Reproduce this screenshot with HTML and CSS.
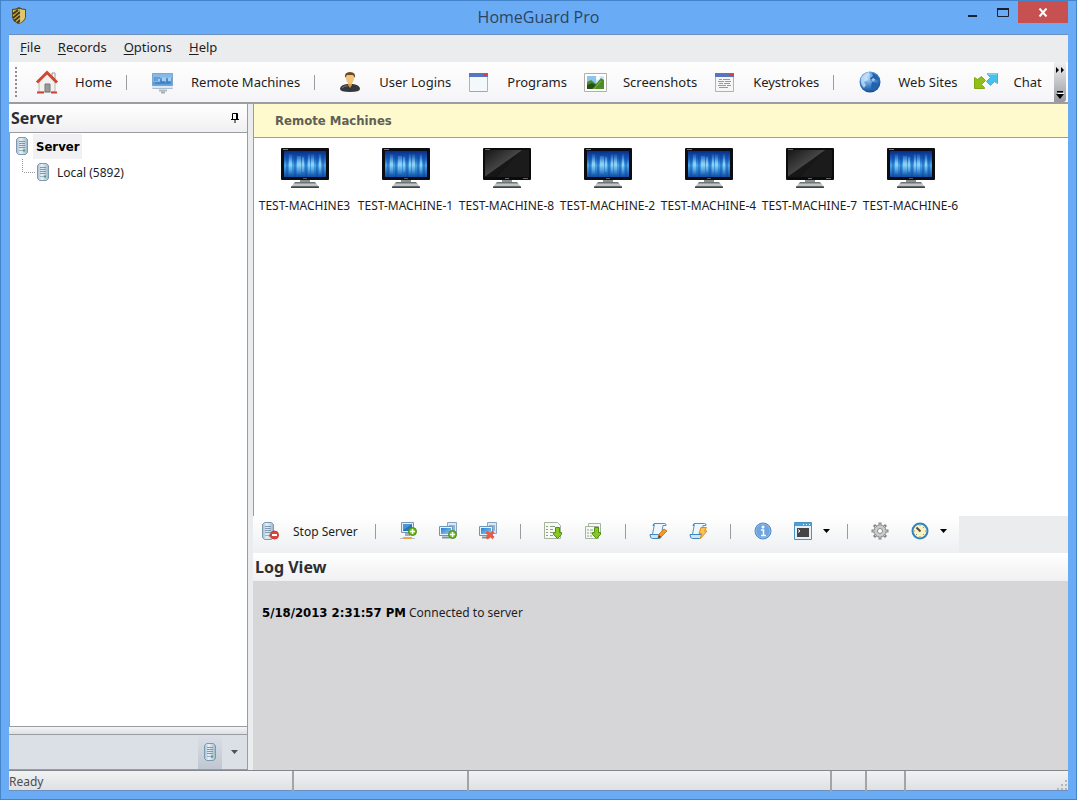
FILE: index.html
```html
<!DOCTYPE html>
<html lang="en">
<head>
    <meta charset="UTF-8">
    <meta name="viewport" content="width=device-width, initial-scale=1.0">
    <title>HomeGuard Pro</title>
    <link rel="stylesheet" href="styles.css">
</head>
<body>
    <!-- shared icons -->
    <svg class="sprite" width="0" height="0" aria-hidden="true">
        <defs>
            <linearGradient id="screenBlue" x1="0" y1="0" x2="0" y2="1">
                <stop offset="0" stop-color="#0a2a86"/>
                <stop offset="0.3" stop-color="#1560bd"/>
                <stop offset="0.55" stop-color="#48a9ea"/>
                <stop offset="1" stop-color="#0f4fa8"/>
            </linearGradient>
            <linearGradient id="beam" x1="0" y1="0" x2="0" y2="1">
                <stop offset="0" stop-color="#8fdcff" stop-opacity="0"/>
                <stop offset="0.5" stop-color="#c8f0ff" stop-opacity="0.9"/>
                <stop offset="1" stop-color="#8fdcff" stop-opacity="0"/>
            </linearGradient>
            <linearGradient id="screenDark" x1="0" y1="0" x2="1" y2="1">
                <stop offset="0" stop-color="#161616"/>
                <stop offset="0.48" stop-color="#454545"/>
                <stop offset="0.5" stop-color="#181818"/>
                <stop offset="1" stop-color="#0c0c0c"/>
            </linearGradient>
            <linearGradient id="stand" x1="0" y1="0" x2="0" y2="1">
                <stop offset="0" stop-color="#5a5f60"/>
                <stop offset="0.6" stop-color="#d5dada"/>
                <stop offset="1" stop-color="#6c7172"/>
            </linearGradient>
            <linearGradient id="steel" x1="0" y1="0" x2="1" y2="0">
                <stop offset="0" stop-color="#a3bccf"/>
                <stop offset="0.4" stop-color="#e9f2f8"/>
                <stop offset="1" stop-color="#9db5c8"/>
            </linearGradient>
            <linearGradient id="pcBlue" x1="0" y1="0" x2="1" y2="1">
                <stop offset="0" stop-color="#2b7fce"/>
                <stop offset="1" stop-color="#8ccbf3"/>
            </linearGradient>
            <radialGradient id="globeBlue" cx="0.4" cy="0.3" r="0.7">
                <stop offset="0" stop-color="#b5d9f7"/>
                <stop offset="0.5" stop-color="#4b8fd6"/>
                <stop offset="1" stop-color="#164a94"/>
            </radialGradient>
        </defs>
        <symbol id="monitor-foot" viewBox="0 0 48 40">
            <path d="M19 31h10v4H19z" fill="#8b9090"/>
            <path d="M14 34h20l4 5H10z" fill="url(#stand)"/>
            <path d="M10 38.500h28v1.500H10z" fill="#3f4444"/>
        </symbol>
        <symbol id="monitor-on" viewBox="0 0 48 40">
            <use href="#monitor-foot" width="48" height="40"/>
            <rect width="48" height="32" rx="1" fill="#0b0d12"/>
            <rect x="3" y="3" width="42" height="26" fill="url(#screenBlue)"/>
            <path d="M5 3h2v26H5zM13 3h2v26h-2zM24 3h2v26h-2zM35 3h2v26h-2zM41 3h2v26h-2z" fill="#0c3c9a" opacity="0.35"/>
            <path d="M8 6h3v20H8zM16 8h4v18h-4zM21 9h2v15h-2zM27 5h2v22h-2zM30 6h3v21h-3zM38 5h2v22h-2z" fill="url(#beam)" opacity="0.7"/>
            <path d="M2 1.500h5" stroke="#777" stroke-width="1"/>
            <path d="M22 30.500h4" stroke="#555"/>
        </symbol>
        <symbol id="monitor-off" viewBox="0 0 48 40">
            <use href="#monitor-foot" width="48" height="40"/>
            <rect width="48" height="32" rx="1" fill="#0b0b0b"/>
            <rect x="2" y="2" width="44" height="27" fill="#1b1b1b"/>
            <path d="M2 2h38L14 29H2z" fill="url(#screenDark)"/>
            <path d="M2 1.500h5M22 30.500h4M40 30.500h5" stroke="#666"/>
        </symbol>
        <symbol id="tower" viewBox="0 0 12 18">
            <path d="M2.500.5h7l2 2v13l-2 2h-7l-2-2v-13z" fill="url(#steel)" stroke="#7d99b1"/>
            <path d="M3 4.500h6M3 6.500h6M3 8.500h6M3 10.500h6" stroke="#7f9ab0"/>
            <path d="M3 13.500h4" stroke="#9db3c4"/>
            <path d="M7 12.500h2v2H7z" fill="#4f9a62"/>
        </symbol>
        <symbol id="plus" viewBox="0 0 9 9">
            <circle cx="4.500" cy="4.500" r="4" fill="#6cba1d" stroke="#4a8c12"/>
            <path d="M4.500 2v5M2 4.500h5" stroke="#fff" stroke-width="1.500"/>
        </symbol>
        <symbol id="down" viewBox="0 0 9 12">
            <path d="M2.500.5h4v5h2v2l-4 4-4-4v-2h2z" fill="#86c81e" stroke="#4f8f16"/>
        </symbol>
        <symbol id="pcs" viewBox="0 0 18 18">
            <path d="M8.500.5h9v11h-9z" fill="#dbe8f2" stroke="#8aa5bf"/>
            <path d="M10 3h6v6h-6z" fill="#8fb4d4"/>
            <path d="M.5 4.500h13v9H.5z" fill="#eaf4fb" stroke="#6b95bd"/>
            <path d="M2 6h10v6H2z" fill="url(#pcBlue)"/>
            <path d="M3 15.500h8" stroke="#7f93a4" stroke-width="2"/>
        </symbol>
        <symbol id="scroll" viewBox="0 0 18 18">
            <path d="M5.500 1.500h10q2 0 1.500 2h-3l-1.500 9H3.500z" fill="#eef7fd" stroke="#4b92c8"/>
            <path d="M6 1.500q-2 0-2 2h1M3.500 12.500H1q0 4 2.500 4h7q2 0 2.500-4z" fill="#cfe6f6" stroke="#3c85be"/>
        </symbol>
    </svg>

    <div class="window">
        <header class="titlebar">
            <svg class="app-icon" width="16" height="17" viewBox="0 0 16 17">
                <path d="M1 2q4 0 7-2 3 2 7 2v8q-1 5-7 7-6-2-7-7z" fill="#57502f"/>
                <path d="M2 3q3 0 6-1v14q-5-2-6-6z" fill="#e3b62c"/>
                <path d="M8 2q3 1 6 1v7q-1 4-6 6z" fill="#c9a23a"/>
                <path d="M2 7l5-4M2 11l7-6M3 14l6-5M6 16l3-3" stroke="#3d3a2c" stroke-width="2"/>
                <path d="M9 2q2 1 5 1v7q-1 4-5 6z" fill="#f2dd8c" opacity="0.6"/>
            </svg>
            <h1 class="title">HomeGuard Pro</h1>
            <div class="caption-buttons">
                <button class="caption" aria-label="Minimize">
                    <svg width="12" height="12" viewBox="0 0 12 12"><path d="M1 10h9" stroke="#17222e" stroke-width="2"/></svg>
                </button>
                <button class="caption" aria-label="Maximize">
                    <svg width="12" height="12" viewBox="0 0 12 12"><path d="M.5 3.500h11v7H.5z" fill="none" stroke="#17222e"/><path d="M0 3h12" stroke="#17222e" stroke-width="2"/></svg>
                </button>
                <button class="caption close" aria-label="Close">
                    <svg width="10" height="9" viewBox="0 0 10 9"><path d="M1.500.5l7 8M8.500.5l-7 8" stroke="#fff" stroke-width="2"/></svg>
                </button>
            </div>
        </header>

        <div class="client">
            <nav class="menubar">
                <button><u>F</u>ile</button>
                <button><u>R</u>ecords</button>
                <button><u>O</u>ptions</button>
                <button><u>H</u>elp</button>
            </nav>

            <div class="toolbar">
                <span class="grip"></span>
                <button class="tool">
                    <svg width="24" height="24" viewBox="0 0 24 24">
                        <path d="M4 11l8-8 8 8v11H4z" fill="#f1f1ef" stroke="#b9b9b4"/>
                        <path d="M17 3h3v6l-3-3z" fill="#fff" stroke="#999"/>
                        <path d="M2 12.500L12 2.500l10 10" fill="none" stroke="#cf4636" stroke-width="3"/>
                        <path d="M10 14h5v8h-5z" fill="#9a9a9a" stroke="#777"/>
                        <path d="M2 22.500h7M16 22.500h6" stroke="#cc4333" stroke-width="2"/>
                    </svg>
                    Home
                </button>
                <span class="sep"></span>
                <button class="tool">
                    <svg width="24" height="24" viewBox="0 0 24 24">
                        <path d="M1 3h21v16H1z" fill="#dfe7ef"/>
                        <path d="M1.500 3.500h20v12h-20z" fill="#5f9ddb" stroke="#7aa5d0"/>
                        <path d="M2 4h19v4L2 12z" fill="#86b8ea"/>
                        <path d="M4 7.500h5v4H4zM11 7.500h4v4h-4zM17 7.500h3v4h-3z" fill="#a4cdf3"/>
                        <path d="M3 8h6M3 10h4M10 8v4h4M16 8v4h4M4 13h15" fill="none" stroke="#3473b4"/>
                        <path d="M1.500 18.500h20" stroke="#a9bdd0"/>
                        <path d="M8 20.500h8" stroke="#b3b8bd" stroke-width="2"/>
                        <path d="M10 22.500h4" stroke="#a7acb2" stroke-width="2"/>
                    </svg>
                    Remote Machines
                </button>
                <span class="sep"></span>
                <button class="tool">
                    <svg width="24" height="24" viewBox="0 0 24 24">
                        <path d="M1 19q0-4 7-5h6q7 1 7 5 0 3-10 3T1 19z" fill="#35373b"/>
                        <path d="M9 12h4v3l-2 3-2-3z" fill="#d79c50"/>
                        <path d="M7 6q0-3 4-3t4 3v3q-1 5-4 5t-4-5z" fill="#f0c57e"/>
                        <path d="M6 8q-1-6 5-6t5 6l-2-3H8z" fill="#70481b"/>
                        <path d="M3 18q3-3 6-2" fill="none" stroke="#74777b"/>
                    </svg>
                    User Logins
                </button>
                <button class="tool">
                    <svg width="24" height="24" viewBox="0 0 24 24">
                        <path d="M2.500 3.500h18v18h-18z" fill="#f3f9fa" stroke="#9fb9c2"/>
                        <path d="M2 3h19v4H2z" fill="#5a75bf"/>
                        <path d="M17 4h3v2h-3z" fill="#db3b3b"/>
                        <path d="M3 21.500h17" stroke="#7cbd92"/>
                    </svg>
                    Programs
                </button>
                <button class="tool">
                    <svg width="24" height="24" viewBox="0 0 24 24">
                        <path d="M1.500 3.500h22v18h-22z" fill="#fff" stroke="#b1b1aa"/>
                        <path d="M4 6h17v13H4z" fill="#8dc4ef"/>
                        <path d="M13 6h8v7h-8z" fill="#cfe8f9"/>
                        <circle cx="15" cy="8" r="2" fill="#fff"/>
                        <path d="M4 12l4-2 5 4 5-6 3 2v9H4z" fill="#4d8d27"/>
                        <path d="M4 15l5-2 4 2-4 4H4z" fill="#274f18"/>
                        <path d="M11 19l7-8" stroke="#87b947"/>
                    </svg>
                    Screenshots
                </button>
                <button class="tool">
                    <svg width="24" height="24" viewBox="0 0 24 24">
                        <path d="M2.500 3.500h18v18h-18z" fill="#f5f6f5" stroke="#9fb9c2"/>
                        <path d="M2 3h19v4H2z" fill="#5a75bf"/>
                        <path d="M17 4h3v2h-3z" fill="#db3b3b"/>
                        <path d="M6 9.500h3M10 9.500h7M5 11.500h6M12 11.500h6M6 13.500h4M11 13.500h6M5 15.500h8M14 15.500h4M6 17.500h9" stroke="#999"/>
                        <path d="M3 21.500h17" stroke="#8bc79c"/>
                    </svg>
                    Keystrokes
                </button>
                <span class="sep"></span>
                <button class="tool">
                    <svg width="24" height="24" viewBox="0 0 24 24">
                        <circle cx="12" cy="12" r="10.500" fill="url(#globeBlue)"/>
                        <path d="M3 8q3-5 8-6l1 3-3 2 1 3-4 2 2 3-2 3q-4-4-3-10z" fill="#d5e9f8" opacity="0.7"/>
                        <path d="M14 3q5 1 7 6l-2 1-3-1-3 2-1-3 3-2zM14 12l5 1 2 2q-2 5-6 6l-2-4z" fill="#2462ad"/>
                        <path d="M13 10l2-2 2 1-1 2z" fill="#d5e9f8" opacity="0.7"/>
                    </svg>
                    Web Sites
                </button>
                <button class="tool">
                    <svg width="24" height="24" viewBox="0 0 24 24">
                        <path d="M.5 7.500l3 2 4-3 4 4-4 4 3 3v1H.5z" fill="#91bf17" stroke="#80a816"/>
                        <path d="M23.500 3.500v10l-3-2-4 4-4-4 4-4-3-3v-1z" fill="#45c2eb" stroke="#3fb1da"/>
                        <path d="M14 4h9" stroke="#a7e7fb"/>
                    </svg>
                    Chat
                </button>
                <button class="overflow" aria-label="Toolbar options">
                    <svg width="8" height="6" viewBox="0 0 8 6"><path d="M0 0l3 3-3 3zM5 0l3 3-3 3z"/></svg>
                    <svg width="8" height="8" viewBox="0 0 8 8"><path d="M1 0h6v1.500H1zM0 3h8L4 8z"/><path d="M2 2.500h6" stroke="#fff"/></svg>
                </button>
            </div>

            <div class="workspace">
                <aside class="sidebar">
                    <div class="panel-head">
                        <h2>Server</h2>
                        <button class="pin" aria-label="Pin panel">
                            <svg width="8" height="10" viewBox="0 0 8 10"><path d="M1.500 6V.5h5V6M5.500 1v5M0 6.500h8M4 7v3" fill="none" stroke="#000"/></svg>
                        </button>
                    </div>
                    <ul class="tree">
                        <li>
                            <button class="node selected">
                                <svg width="12" height="18"><use href="#tower"/></svg>
                                <span>Server</span>
                            </button>
                            <ul>
                                <li>
                                    <button class="node">
                                        <svg width="12" height="18"><use href="#tower"/></svg>
                                        <span>Local (5892)</span>
                                    </button>
                                </li>
                            </ul>
                        </li>
                    </ul>
                    <div class="side-splitter"></div>
                    <div class="side-footer">
                        <button class="side-tab" aria-label="Server">
                            <svg width="12" height="18"><use href="#tower"/></svg>
                        </button>
                        <button class="side-more" aria-label="Configure">
                            <svg width="7" height="4" viewBox="0 0 7 4"><path d="M0 0h7L3.500 4z" fill="#4b5158"/></svg>
                        </button>
                    </div>
                </aside>

                <main class="content">
                    <h2 class="banner">Remote Machines</h2>
                    <div class="machines">
                        <button class="machine"><svg width="48" height="40"><use href="#monitor-on"/></svg>TEST-MACHINE3</button>
                        <button class="machine"><svg width="48" height="40"><use href="#monitor-on"/></svg>TEST-MACHINE-1</button>
                        <button class="machine"><svg width="48" height="40"><use href="#monitor-off"/></svg>TEST-MACHINE-8</button>
                        <button class="machine"><svg width="48" height="40"><use href="#monitor-on"/></svg>TEST-MACHINE-2</button>
                        <button class="machine"><svg width="48" height="40"><use href="#monitor-on"/></svg>TEST-MACHINE-4</button>
                        <button class="machine"><svg width="48" height="40"><use href="#monitor-off"/></svg>TEST-MACHINE-7</button>
                        <button class="machine"><svg width="48" height="40"><use href="#monitor-on"/></svg>TEST-MACHINE-6</button>
                    </div>

                    <div class="actions-row">
                        <div class="actions">
                            <button class="action stop">
                                <svg width="18" height="18" viewBox="0 0 18 18">
                                    <use href="#tower" width="12" height="18"/>
                                    <circle cx="12.500" cy="13" r="4" fill="#e0453a" stroke="#c9382f"/>
                                    <path d="M10 13h5" stroke="#fff" stroke-width="2"/>
                                </svg>
                                Stop Server
                            </button>
                            <span class="sep"></span>
                            <button class="action" aria-label="Add machine">
                                <svg width="18" height="18" viewBox="0 0 18 18">
                                    <path d="M2.500.5h12v10h-12z" fill="#e4eef6" stroke="#7f97ae"/>
                                    <path d="M4 2h9v7H4z" fill="#2676bd"/>
                                    <path d="M4 2h9L4 8z" fill="#4b97d8"/>
                                    <path d="M6 11h5v3H6z" fill="#a5adb5"/>
                                    <path d="M1 16.500h15" stroke="#b9bec4"/>
                                    <path d="M4 15h9v2H4z" fill="#f0a548"/>
                                    <use href="#plus" x="9" y="5" width="9" height="9"/>
                                </svg>
                            </button>
                            <button class="action" aria-label="Add group">
                                <svg width="18" height="18" viewBox="0 0 18 18">
                                    <use href="#pcs" width="18" height="18"/>
                                    <use href="#plus" x="9" y="8" width="9" height="9"/>
                                </svg>
                            </button>
                            <button class="action" aria-label="Remove machine">
                                <svg width="18" height="18" viewBox="0 0 18 18">
                                    <use href="#pcs" width="18" height="18"/>
                                    <path d="M7.500 10l7 6M14.500 9.500l-7 7" stroke="#e85a42" stroke-width="3"/>
                                </svg>
                            </button>
                            <span class="sep"></span>
                            <button class="action" aria-label="Download records">
                                <svg width="18" height="18" viewBox="0 0 18 18">
                                    <path d="M.5.5h13l3 3v13H.5z" fill="#f6f9f4" stroke="#a5b3a0"/>
                                    <path d="M2 4.500h2M6 4.500h5M2 7.500h2M6 7.500h3M2 10.500h2M6 10.500h3M2 13.500h2M6 13.500h3" stroke="#8ba183"/>
                                    <use href="#down" x="9" y="5" width="9" height="12"/>
                                </svg>
                            </button>
                            <button class="action" aria-label="Download all records">
                                <svg width="18" height="18" viewBox="0 0 18 18">
                                    <path d="M4.500 1.500h12v11h-12z" fill="#f6f9f4" stroke="#a5b3a0"/>
                                    <path d="M1.500 4.500h13v12h-13z" fill="#f6f9f4" stroke="#a5b3a0"/>
                                    <path d="M3 8h2M6 8h3M3 11h2M6 11h2M3 14h2M6 14h2" stroke="#8ba183"/>
                                    <use href="#down" x="8" y="5" width="9" height="12"/>
                                </svg>
                            </button>
                            <span class="sep"></span>
                            <button class="action" aria-label="Edit script">
                                <svg width="18" height="18" viewBox="0 0 18 18">
                                    <use href="#scroll" width="18" height="18"/>
                                    <path d="M9 16l1-4 5-5 3 2-6 6z" fill="#ef9a2c" stroke="#cf7f26"/>
                                    <path d="M9 16l1-3 2 2z" fill="#503515"/>
                                </svg>
                            </button>
                            <button class="action" aria-label="Run script">
                                <svg width="18" height="18" viewBox="0 0 18 18">
                                    <use href="#scroll" width="18" height="18"/>
                                    <path d="M12 5.500h5.500l-2 3.500h2.500l-6.500 7.500 1-5H10z" fill="#fbc352" stroke="#e08a1e"/>
                                </svg>
                            </button>
                            <span class="sep"></span>
                            <button class="action" aria-label="Information">
                                <svg width="18" height="18" viewBox="0 0 18 18">
                                    <circle cx="9" cy="9" r="8" fill="#6fa5de" stroke="#4b86c8"/>
                                    <circle cx="9" cy="9" r="7" fill="none" stroke="#8db9e8"/>
                                    <circle cx="9" cy="5" r="1.500" fill="#fff"/>
                                    <path d="M7 8h2.500v5M7 13.500h5" fill="none" stroke="#fff" stroke-width="1.500"/>
                                </svg>
                            </button>
                            <button class="action split" aria-label="Console">
                                <svg width="18" height="18" viewBox="0 0 18 18">
                                    <path d="M.5.5h17v17H.5z" fill="#e3f1fa" stroke="#4b93c4"/>
                                    <path d="M1 1h16v3H1z" fill="#49a1d8"/>
                                    <path d="M9 2.500h1M12 2.500h1M15 2.500h1" stroke="#fff"/>
                                    <path d="M3 6h12v9H3z" fill="#454545"/>
                                    <path d="M4 7.500l2 1.500-2 1.500" fill="none" stroke="#fff"/>
                                </svg>
                                <svg width="7" height="4" viewBox="0 0 7 4"><path d="M0 0h7L3.500 4z"/></svg>
                            </button>
                            <span class="sep"></span>
                            <button class="action" aria-label="Settings">
                                <svg width="18" height="18" viewBox="0 0 18 18">
                                    <path d="M9 .5v17M.5 9h17M3 3l12 12M15 3L3 15" stroke="#858585" stroke-width="3"/>
                                    <circle cx="9" cy="9" r="6" fill="#cbcbcb" stroke="#8c8c8c"/>
                                    <path d="M9 1.500v15M1.500 9h15M4 4l10 10M14 4L4 14" stroke="#cbcbcb"/>
                                    <circle cx="9" cy="9" r="2.500" fill="#fff" stroke="#8c8c8c"/>
                                </svg>
                            </button>
                            <button class="action split" aria-label="Schedule">
                                <svg width="18" height="18" viewBox="0 0 18 18">
                                    <circle cx="9" cy="9" r="7.500" fill="#fbf3c4" stroke="#3182be" stroke-width="2"/>
                                    <path d="M9 3v1M9 14v1M3 9h1M14 9h1M13 5l-1 1M5 13l1-1M13 13l-1-1" stroke="#a3935c"/>
                                    <path d="M5.500 5.500l4 4" stroke="#4c4c4c" stroke-width="2"/>
                                </svg>
                                <svg width="7" height="4" viewBox="0 0 7 4"><path d="M0 0h7L3.500 4z"/></svg>
                            </button>
                        </div>
                    </div>

                    <div class="panel-head">
                        <h2>Log View</h2>
                    </div>
                    <div class="log">
                        <p><time datetime="2013-05-18T14:31:57">5/18/2013 2:31:57 PM</time> Connected to server</p>
                    </div>
                </main>
            </div>

            <footer class="statusbar">
                <span>Ready</span>
                <span></span>
                <span></span>
                <span></span>
                <span></span>
                <span class="resize">
                    <svg width="13" height="13" viewBox="0 0 13 13"><path d="M10 1h2v2h-2zM10 5h2v2h-2zM6 5h2v2H6zM10 9h2v2h-2zM6 9h2v2H6zM2 9h2v2H2z" fill="#b3b5b9"/></svg>
                </span>
            </footer>
        </div>
    </div>
</body>
</html>
```

FILE: styles.css
```css
* {
    box-sizing: border-box;
}
body {
    margin: 0;
    font-family: "Noto Sans", "Open Sans", sans-serif;
    font-size: 12px;
    color: #1e1e1e;
}
button {
    margin: 0;
    padding: 0;
    border: none;
    background: none;
    font: inherit;
    color: inherit;
    white-space: nowrap;
}
svg {
    display: block;
    flex: none;
}
h1, h2, p, ul {
    margin: 0;
    padding: 0;
}
ul {
    list-style: none;
}
.sprite {
    position: absolute;
}

/* window frame */
.window {
    display: flex;
    flex-direction: column;
    height: 100vh;
    padding: 0 8px 8px;
    background: #6aabf6;
    border: 1px solid #4384cb;
}
.titlebar {
    display: grid;
    grid-template-columns: 1fr auto 1fr;
    height: 33px;
    flex: none;
}
.app-icon {
    margin: 6px 2px;
}
.title {
    font-size: 16px;
    font-weight: normal;
    line-height: 32px;
    color: #2b4560;
    font-family: "Open Sans", sans-serif;
}
.caption-buttons {
    display: flex;
    justify-content: flex-end;
    align-items: flex-start;
}
.caption {
    display: flex;
    align-items: center;
    justify-content: center;
    width: 30px;
    height: 22px;
}
.close {
    width: 50px;
    background: #c75050;
}
.client {
    display: flex;
    flex-direction: column;
    flex: 1;
    min-height: 0;
    border-top: 1px solid #6d8fc0;
    border-bottom: 1px solid #6d8fc0;
    background: #ebecee;
}

/* menu and toolbar */
.menubar {
    display: flex;
    gap: 17px;
    height: 27px;
    padding: 0 11px 3px;
    flex: none;
    font-size: 13px;
}
.menubar u {
    text-underline-offset: 2px;
}
.toolbar {
    display: flex;
    align-items: center;
    height: 42px;
    padding: 0 2px 0 6px;
    flex: none;
    font-size: 13px;
    background: linear-gradient(#fefefe, #f5f5f8);
    border-bottom: 2px solid #9b9da3;
}
.grip {
    width: 2px;
    height: 30px;
    margin-right: 2px;
    background: repeating-linear-gradient(#8c8e92 0 2px, transparent 2px 4px);
}
.tool {
    display: flex;
    align-items: center;
    gap: 16px;
    margin-left: 16px;
}
.sep {
    width: 1px;
    height: 15px;
    background: #9a9ca1;
}
.toolbar .sep {
    margin: 0 8px 0 14px;
}
.overflow {
    display: flex;
    flex-direction: column;
    flex: none;
    align-items: center;
    justify-content: space-between;
    align-self: stretch;
    width: 12px;
    margin-left: auto;
    padding: 5px 0 3px;
    background: linear-gradient(#f1f1f3, #96989d);
    border-radius: 0 0 3px 0;
}

/* panels */
.workspace {
    display: flex;
    flex: 1;
    min-height: 0;
}
.sidebar {
    display: flex;
    flex-direction: column;
    width: 239px;
    flex: none;
    border-right: 1px solid #9a9ca1;
}
.panel-head {
    display: flex;
    align-items: center;
    justify-content: space-between;
    height: 28px;
    padding: 0 8px 0 2px;
    flex: none;
    background: linear-gradient(#fff, #f0f0f2);
}
.panel-head h2 {
    font-size: 16px;
    line-height: 28px;
    color: #2c2e31;
}
.tree {
    flex: 1;
    padding: 0 6px;
    background: #fff;
    border: 1px solid #9a9ca1;
    border-width: 1px 0 1px 1px;
}
.tree ul {
    padding-left: 21px;
    background:
        repeating-linear-gradient(#999 0 1px, #fff 1px 2px) 6px 0 / 1px 14px no-repeat,
        repeating-linear-gradient(90deg, #999 0 1px, #fff 1px 2px) 6px 13px / 13px 1px no-repeat;
}
.node {
    display: flex;
    align-items: center;
    gap: 5px;
    height: 26px;
}
.node span {
    padding: 0 3px;
    line-height: 25px;
}
.selected {
    font-family: "DejaVu Sans Condensed", "DejaVu Sans", sans-serif;
    font-weight: bold;
    font-size: 13px;
    color: #000;
}
.selected span {
    background: #f1f1f3;
}
.side-splitter {
    height: 7px;
    background: linear-gradient(#f4f5f6, #dddfe2);
}
.side-footer {
    display: flex;
    justify-content: flex-end;
    height: 36px;
    padding-right: 9px;
    background: #dbdfe6;
    border-top: 1px solid #9a9ca1;
    border-bottom: 1px solid #9a9ca1;
}
.side-tab {
    padding: 0 6px;
    margin-right: 9px;
    background: linear-gradient(#dbdfe6, #bfc7d2);
}
.content {
    display: flex;
    flex-direction: column;
    flex: 1;
    min-width: 0;
    margin-left: 5px;
}
.banner {
    padding-left: 21px;
    font-family: "DejaVu Sans Condensed", "DejaVu Sans", sans-serif;
    font-size: 13px;
    line-height: 33px;
    color: #5f5f57;
    background: #fffacd;
    border-bottom: 1px solid #9a9ca1;
    border-left: 1px solid #9a9ca1;
}
.machines {
    display: flex;
    flex-wrap: wrap;
    align-content: flex-start;
    flex: 1;
    padding-top: 10px;
    background: #fff;
    border-left: 1px solid #9a9ca1;
}
.machine {
    display: flex;
    flex-direction: column;
    align-items: center;
    gap: 9px;
    width: 101px;
}

/* server actions */
.actions-row {
    display: flex;
    flex: none;
}
.actions {
    display: flex;
    align-items: center;
    gap: 22px;
    height: 37px;
    padding: 0 18px 7px 9px;
    background: linear-gradient(#fff, #eeeff1);
}
.actions .sep {
    margin: 0 1px;
}
.action {
    display: flex;
    align-items: center;
    gap: 11px;
}
.stop {
    gap: 13px;
    margin-right: -6px;
}
.split {
    margin-right: -6px;
}
.log {
    height: 189px;
    flex: none;
    padding: 22px 9px;
    background: #d6d5d8;
}
.log p {
    line-height: 20px;
}
.log time {
    font-family: "DejaVu Sans Condensed", "DejaVu Sans", sans-serif;
    font-size: 13px;
    font-weight: bold;
    color: #000;
}

/* status bar */
.statusbar {
    display: grid;
    grid-template-columns: 285px 175px 1fr 35px 39px 162px;
    height: 20px;
    flex: none;
    font-size: 12px;
    line-height: 21px;
    color: #4b4d50;
    background: linear-gradient(#f1f2f4, #dfe0e2);
    border-top: 1px solid #85878c;
}
.statusbar span {
    border-right: 2px solid #a2a4a9;
}
.statusbar .resize {
    display: flex;
    align-items: flex-end;
    justify-content: flex-end;
    border-right: none;
}
```
